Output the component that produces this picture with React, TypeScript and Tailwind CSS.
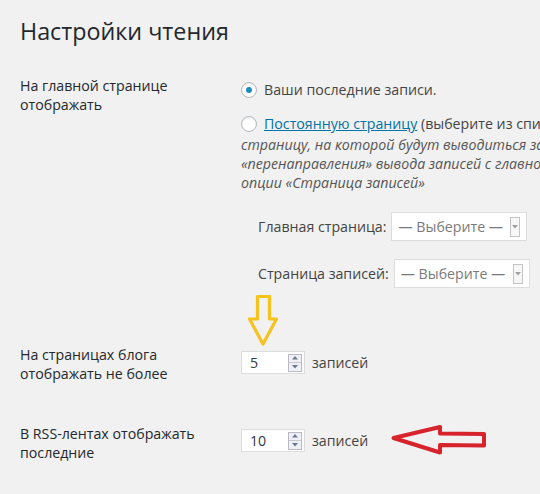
import React from "react";

function Radio({ checked }: { checked?: boolean }) {
  return (
    <span className="relative inline-flex w-[16px] h-[16px] shrink-0 items-center justify-center rounded-full border border-[#b4b9be] bg-white shadow-[inset_0_1px_2px_rgba(0,0,0,0.1)]">
      {checked && <span className="w-[6px] h-[6px] rounded-full bg-[#1e8cbe]" />}
    </span>
  );
}

function Select({ width }: { width: string }) {
  return (
    <div className={`flex items-center justify-between h-[29px] bg-white border border-[#dddddd] pl-[6px] pr-[6px] ${width}`}>
      <span className="text-[14.2px] text-[#7a7a7a]">— Выберите —</span>
      <span className="flex items-center justify-center w-[10px] h-[20px] border border-[#c4c4c4] bg-[#f7f7f7]">
        <svg width="6" height="4" viewBox="0 0 6 4">
          <path d="M0 0 L6 0 L3 3.5 Z" fill="#a0a0a0" />
        </svg>
      </span>
    </div>
  );
}

function NumberInput({ value }: { value: string }) {
  return (
    <div className="flex items-center justify-between w-[64px] h-[23px] bg-white border border-[#dddddd] pl-[8px] pr-[2px]">
      <span className="text-[14.2px] text-[#32373c]">{value}</span>
      <span className="flex flex-col w-[14px] h-[18px] border border-[#b9b9c8] bg-[#eef0f5]">
        <span className="flex flex-1 items-center justify-center border-b border-[#c6c8d4]">
          <svg width="6" height="4" viewBox="0 0 6 4"><path d="M0 3.5 L6 3.5 L3 0 Z" fill="#6b7691" /></svg>
        </span>
        <span className="flex flex-1 items-center justify-center">
          <svg width="6" height="4" viewBox="0 0 6 4"><path d="M0 0 L6 0 L3 3.5 Z" fill="#6b7691" /></svg>
        </span>
      </span>
    </div>
  );
}

export default function App() {
  return (
    <div
      className="relative w-[540px] h-[494px] overflow-hidden bg-[#f1f1f1] pl-[20px] text-[14.2px] leading-[19px] text-[#444]"
      style={{ fontFamily: '"Open Sans", "Noto Sans", sans-serif' }}
    >
      <h1 className="pt-[17px] text-[23.3px] leading-[29px] font-normal text-[#23282d]">Настройки чтения</h1>

      {/* Row 1 */}
      <div className="flex mt-[30px]">
        <div className="w-[221px] shrink-0 text-[#23282d]">
          На главной странице
          <br />
          отображать
        </div>
        <div className="pt-[4px] whitespace-nowrap">
          <div className="flex items-center gap-[7px]">
            <Radio checked />
            <span>Ваши последние записи.</span>
          </div>
          <div className="flex items-center gap-[7px] mt-[15px]">
            <Radio />
            <span>
              <span className="text-[#0073aa] underline">Постоянную страницу</span> (выберите из списка ниже)
            </span>
          </div>
          <div className="italic text-[#555] mt-[2px]">
            страницу, на которой будут выводиться записи блога, а также настройку
            <br />
            «перенаправления» вывода записей с главной страницы блога с помощью
            <br />
            опции «Страница записей»
          </div>
          <div className="pl-[17px] mt-[20px] flex flex-col gap-[18px]">
            <div className="flex items-center gap-[5px]">
              <span className="text-[#444]">Главная страница:</span>
              <Select width="w-[136px]" />
            </div>
            <div className="flex items-center gap-[5px]">
              <span className="text-[#444]">Страница записей:</span>
              <Select width="w-[136px]" />
            </div>
          </div>
        </div>
      </div>

      {/* Row 2 */}
      <div className="flex mt-[57px]">
        <div className="w-[221px] shrink-0 text-[#23282d]">
          На страницах блога
          <br />
          отображать не более
        </div>
        <div className="flex items-center gap-[7px] h-[23px] mt-[6px]">
          <NumberInput value="5" />
          <span>записей</span>
        </div>
      </div>

      {/* Row 3 */}
      <div className="flex mt-[41px]">
        <div className="w-[221px] shrink-0 text-[#23282d]">
          В RSS-лентах отображать
          <br />
          последние
        </div>
        <div className="flex items-center gap-[7px] h-[23px] mt-[5px]">
          <NumberInput value="10" />
          <span>записей</span>
        </div>
      </div>

      {/* Yellow arrow */}
      <svg className="absolute left-[248px] top-[295px]" width="31" height="52" viewBox="0 0 31 52">
        <path
          d="M9.5 1.5 L21.5 1.5 L21.5 24 L28.5 24 L15 49 L1.5 24 L9.5 24 Z"
          fill="none"
          stroke="#f6c21c"
          strokeWidth="3.2"
          strokeLinejoin="round"
        />
      </svg>

      {/* Red arrow */}
      <svg className="absolute left-[390px] top-[424px]" width="98" height="32" viewBox="0 0 98 32">
        <path
          d="M3.5 14 L50 3 L50 9.5 L94 10 L94 21.5 L50 21 L50 28.5 Z"
          fill="none"
          stroke="#d7232b"
          strokeWidth="4"
          strokeLinejoin="round"
        />
      </svg>
    </div>
  );
}
